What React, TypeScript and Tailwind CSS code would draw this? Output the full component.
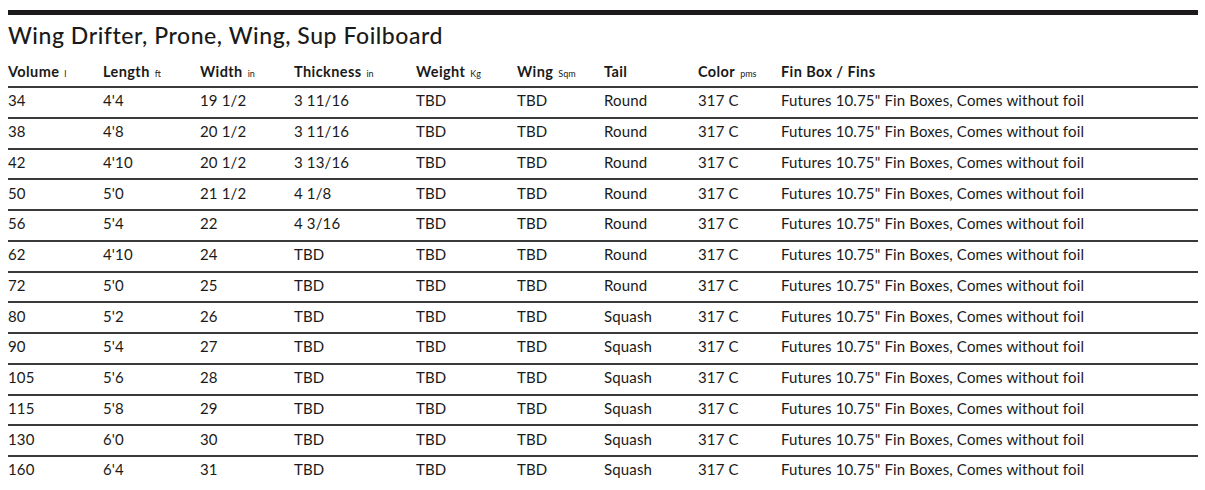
import React from "react";

type Row = [string, string, string, string, string, string, string, string, string];

const FIN = 'Futures 10.75" Fin Boxes, Comes without foil';

const rows: Row[] = [
  ["34", "4'4", "19 1/2", "3 11/16", "TBD", "TBD", "Round", "317 C", FIN],
  ["38", "4'8", "20 1/2", "3 11/16", "TBD", "TBD", "Round", "317 C", FIN],
  ["42", "4'10", "20 1/2", "3 13/16", "TBD", "TBD", "Round", "317 C", FIN],
  ["50", "5'0", "21 1/2", "4 1/8", "TBD", "TBD", "Round", "317 C", FIN],
  ["56", "5'4", "22", "4 3/16", "TBD", "TBD", "Round", "317 C", FIN],
  ["62", "4'10", "24", "TBD", "TBD", "TBD", "Round", "317 C", FIN],
  ["72", "5'0", "25", "TBD", "TBD", "TBD", "Round", "317 C", FIN],
  ["80", "5'2", "26", "TBD", "TBD", "TBD", "Squash", "317 C", FIN],
  ["90", "5'4", "27", "TBD", "TBD", "TBD", "Squash", "317 C", FIN],
  ["105", "5'6", "28", "TBD", "TBD", "TBD", "Squash", "317 C", FIN],
  ["115", "5'8", "29", "TBD", "TBD", "TBD", "Squash", "317 C", FIN],
  ["130", "6'0", "30", "TBD", "TBD", "TBD", "Squash", "317 C", FIN],
  ["160", "6'4", "31", "TBD", "TBD", "TBD", "Squash", "317 C", FIN],
];

const headers: [string, string][] = [
  ["Volume", "l"],
  ["Length", "ft"],
  ["Width", "in"],
  ["Thickness", "in"],
  ["Weight", "Kg"],
  ["Wing", "Sqm"],
  ["Tail", ""],
  ["Color", "pms"],
  ["Fin Box / Fins", ""],
];

const cols = "grid grid-cols-[95px_97px_94px_122px_101px_87px_94px_83px_1fr]";

export default function App() {
  return (
    <div
      className="bg-white text-[#1a1a1a] w-[1205px] h-[490px] overflow-hidden"
      style={{ fontFamily: "Lato, 'Noto Sans', sans-serif" }}
    >
      <div className="ml-2 mr-[7px] pt-[10px]">
        <div className="h-[5px] bg-[#1c1a1a]" />
        <h1 className="text-[23px] leading-[28px] mt-[6px] font-medium tracking-[0.55px]">
          Wing Drifter, Prone, Wing, Sup Foilboard
        </h1>
        <div className={`${cols} h-[37px] items-end pb-[5px]`}>
          {headers.map(([h, u]) => (
            <div key={h} className="h-[18px] text-[14.5px] leading-[18px] font-bold tracking-[0.4px] whitespace-nowrap">
              {h}
              {u && <span className="text-[9px] leading-none font-normal tracking-normal ml-[5px]">{u}</span>}
            </div>
          ))}
        </div>
        {rows.map((r, i) => (
          <div
            key={i}
            className={`${cols} h-[30.75px] items-center border-t-2 border-[#3a3a3a] text-[15px] leading-[18px] tracking-[0.15px] pb-[4px]`}
          >
            {r.map((c, j) => (
              <div key={j} className="whitespace-nowrap">
                {c}
              </div>
            ))}
          </div>
        ))}
      </div>
    </div>
  );
}
